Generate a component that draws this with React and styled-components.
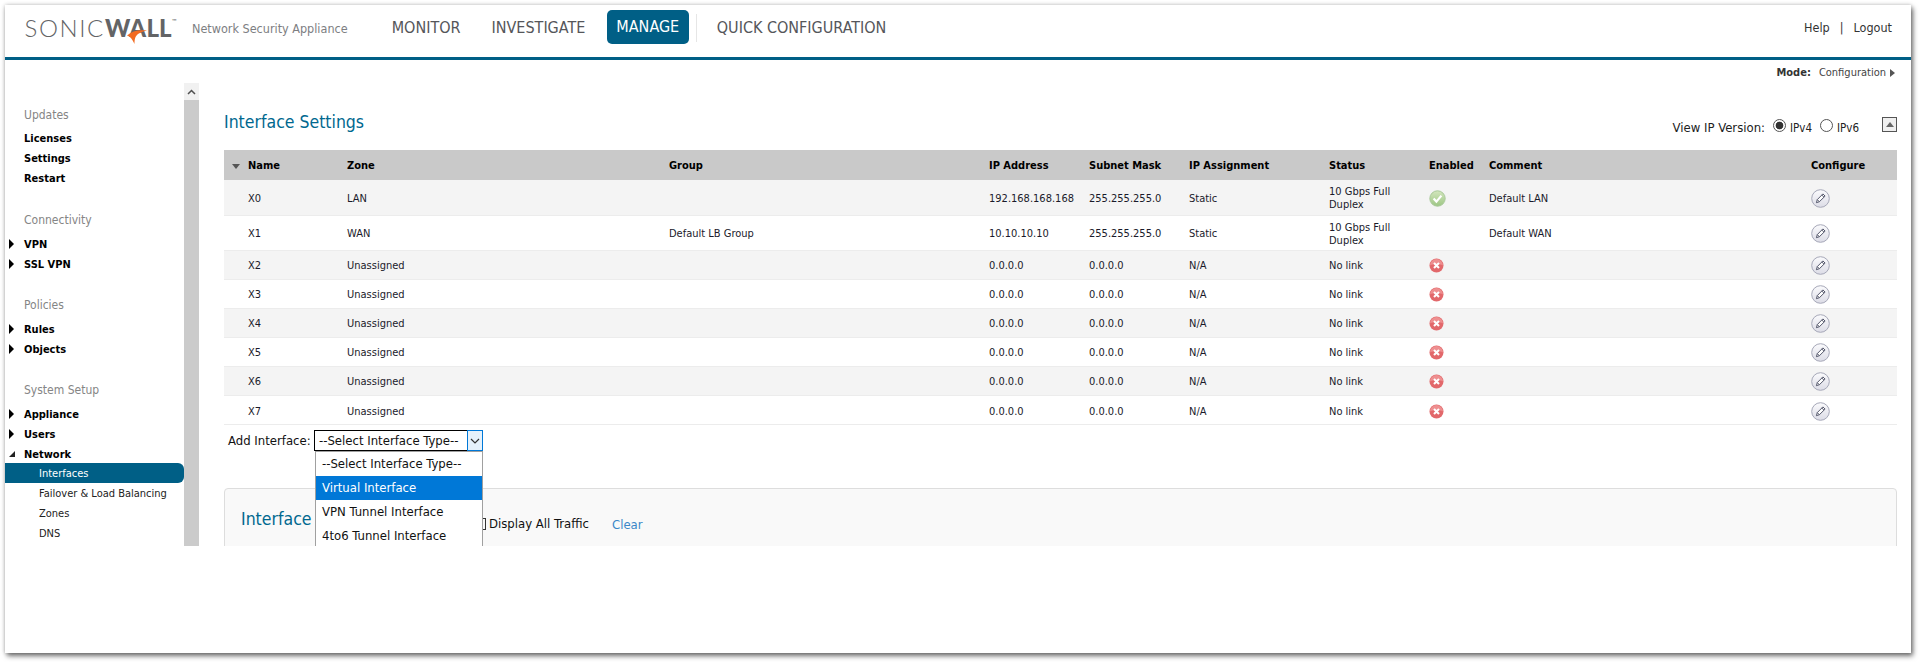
import React from 'react';
import styled, { createGlobalStyle } from 'styled-components';

const Global = createGlobalStyle`
	html, body { margin: 0; padding: 0; background: #fff; }
	body { font-family: "DejaVu Sans Condensed", "DejaVu Sans", sans-serif; font-stretch: condensed; color: #111; }
`;

const rows = [
	{ name: 'X0', zone: 'LAN', ip: '192.168.168.168', mask: '255.255.255.0', assign: 'Static', status: '10 Gbps Full Duplex', enabled: 'on', comment: 'Default LAN', tall: true },
	{ name: 'X1', zone: 'WAN', group: 'Default LB Group', ip: '10.10.10.10', mask: '255.255.255.0', assign: 'Static', status: '10 Gbps Full Duplex', comment: 'Default WAN', tall: true },
	...['X2', 'X3', 'X4', 'X5', 'X6', 'X7'].map(name => ({
		name,
		zone: 'Unassigned',
		ip: '0.0.0.0',
		mask: '0.0.0.0',
		assign: 'N/A',
		status: 'No link',
		enabled: 'off'
	}))
];

const columns = [123, 322, 320, 100, 100, 140, 100, 60, 322, 86];

const menu = [
	{ title: 'Updates', items: [{ label: 'Licenses' }, { label: 'Settings' }, { label: 'Restart' }] },
	{ title: 'Connectivity', items: [{ label: 'VPN', arrow: 'closed' }, { label: 'SSL VPN', arrow: 'closed' }] },
	{ title: 'Policies', items: [{ label: 'Rules', arrow: 'closed' }, { label: 'Objects', arrow: 'closed' }] },
	{ title: 'System Setup', items: [{ label: 'Appliance', arrow: 'closed' }, { label: 'Users', arrow: 'closed' }, { label: 'Network', arrow: 'open' }] }
];

const subMenu = ['Interfaces', 'Failover & Load Balancing', 'Zones', 'DNS'];

const StatusIcon = ({ state }) => {
	if (state === 'on') {
		return (
			<IconSvg width='17' height='17' viewBox='0 0 17 17'>
				<defs>
					<linearGradient id='okFill' x1='0' y1='0' x2='0' y2='1'>
						<stop offset='0' stopColor='#d3e6bd' />
						<stop offset='1' stopColor='#9dc684' />
					</linearGradient>
				</defs>
				<circle cx='8.5' cy='8.5' r='7.7' fill='url(#okFill)' stroke='#a9c99a' />
				<path d='M4.6 8.6l2.8 3 5-6' fill='none' stroke='#fff' strokeWidth='2.2' />
			</IconSvg>
		);
	}
	return (
		<IconSvg width='15' height='15' viewBox='0 0 15 15'>
			<circle cx='7.5' cy='7.5' r='7' fill='#e2686b' />
			<path d='M1 7.5a6.500 6.500 0 0 1 13 0c-3-2-10-2-13 0z' fill='#ee8f90' />
			<path d='M5 5l5 5M10 5l-5 5' stroke='#fff' strokeWidth='2.1' />
		</IconSvg>
	);
};

const PencilIcon = () => (
	<IconSvg width='19' height='19' viewBox='0 0 19 19'>
		<defs>
			<linearGradient id='penFill' x1='0' y1='0' x2='0' y2='1'>
				<stop offset='0' stopColor='#fbfbfd' />
				<stop offset='1' stopColor='#dcdce6' />
			</linearGradient>
		</defs>
		<circle cx='9.5' cy='9.5' r='8.8' fill='url(#penFill)' stroke='#a6a8b8' />
		<path d='M5.400 13.700l.9-3.100 5.600-5.700 2.200 2.200-5.700 5.600z' fill='#fff' stroke='#55586c' strokeWidth='1' strokeLinejoin='round' />
		<path d='M6.300 10.600l2.100 2.200M10.800 6l2.200 2.200' stroke='#55586c' strokeWidth='1' />
	</IconSvg>
);

export default function App() {
	return (
		<>
			<Global />
			<Window>
				<Header>
					<Logo>
						<LogoText>SONIC</LogoText>
						<LogoStrong>WALL</LogoStrong>
						<LogoMark>™</LogoMark>
						<Swoosh width='24' height='18' viewBox='0 0 24 18'>
							<path d='M22 1.500C13 .5 7 2 2 6.500C5.500 7.500 7.500 10.500 9.500 15C9.500 10.500 10 7.500 13 5C15.500 3.300 18 2.500 22 1.500Z' fill='#f26b21' />
						</Swoosh>
					</Logo>
					<Product>Network Security Appliance</Product>
					<NavLink $left={44}>MONITOR</NavLink>
					<NavLink $left={31}>INVESTIGATE</NavLink>
					<ActiveNav>MANAGE</ActiveNav>
					<NavDivider />
					<NavLink $left={20}>QUICK CONFIGURATION</NavLink>
					<UserLinks>
						<span>Help</span>
						<Pipe>|</Pipe>
						<span>Logout</span>
					</UserLinks>
				</Header>
				<ModeBar>
					<ModeLabel>Mode:</ModeLabel>
					<span>Configuration</span>
					<ModeArrow />
				</ModeBar>
				<Body>
					<Sidebar>
						{menu.map(group => (
							<div key={group.title}>
								<MenuHead>{group.title}</MenuHead>
								{group.items.map(item => (
									<MenuItem key={item.label} $arrow={item.arrow}>
										{item.label}
									</MenuItem>
								))}
							</div>
						))}
						<div>
							{subMenu.map((label, i) => (
								<SubItem key={label} $active={i === 0}>
									{label}
								</SubItem>
							))}
						</div>
					</Sidebar>
					<Scrollbar>
						<ScrollUp>
							<svg width='9' height='6' viewBox='0 0 9 6'>
								<path d='M1 5l3.500-3.500L8 5' fill='none' stroke='#505050' strokeWidth='1.500' />
							</svg>
						</ScrollUp>
					</Scrollbar>
					<Main>
						<TitleRow>
							<Title>Interface Settings</Title>
							<VersionPicker>
								<span>View IP Version:</span>
								<Radio $checked />
								<RadioLabel>IPv4</RadioLabel>
								<Radio />
								<RadioLabel>IPv6</RadioLabel>
								<CollapseButton />
							</VersionPicker>
						</TitleRow>
						<Table>
							<colgroup>
								{columns.map((w, i) => (
									<col key={i} width={w} />
								))}
							</colgroup>
							<thead>
								<tr>
									<Th $first>
										<SortArrow />
										Name
									</Th>
									<Th>Zone</Th>
									<Th>Group</Th>
									<Th>IP Address</Th>
									<Th>Subnet Mask</Th>
									<Th>IP Assignment</Th>
									<Th>Status</Th>
									<Th>Enabled</Th>
									<Th>Comment</Th>
									<Th>Configure</Th>
								</tr>
							</thead>
							<tbody>
								{rows.map(row => (
									<Row key={row.name} $tall={row.tall}>
										<Td $first>{row.name}</Td>
										<Td>{row.zone}</Td>
										<Td>{row.group}</Td>
										<Td>{row.ip}</Td>
										<Td>{row.mask}</Td>
										<Td>{row.assign}</Td>
										<Td>
											<StatusText>{row.status}</StatusText>
										</Td>
										<Td>{row.enabled && <StatusIcon state={row.enabled} />}</Td>
										<Td>{row.comment}</Td>
										<Td>
											<PencilIcon />
										</Td>
									</Row>
								))}
							</tbody>
						</Table>
						<AddRow>
							<AddLabel>Add Interface:</AddLabel>
							<SelectBox>
								<SelectValue>--Select Interface Type--</SelectValue>
								<SelectButton>
									<svg width='10' height='6' viewBox='0 0 10 6'>
										<path d='M1 1l4 4 4-4' fill='none' stroke='#333' strokeWidth='1.200' />
									</svg>
								</SelectButton>
								<Options>
									<Option>--Select Interface Type--</Option>
									<Option $selected>Virtual Interface</Option>
									<Option>VPN Tunnel Interface</Option>
									<Option>4to6 Tunnel Interface</Option>
								</Options>
							</SelectBox>
						</AddRow>
						<TrafficPanel>
							<PanelTitle>Interface</PanelTitle>
							<CheckBox />
							<TrafficLabel>Display All Traffic</TrafficLabel>
							<ClearLink>Clear</ClearLink>
						</TrafficPanel>
					</Main>
				</Body>
			</Window>
		</>
	);
}

const Window = styled.div`
	position: absolute;
	left: 5px;
	top: 5px;
	width: 1906px;
	height: 648px;
	background: #fff;
	box-shadow: 2px 3px 5px rgba(0, 0, 0, 0.55), 0 0 4px rgba(0, 0, 0, 0.22);
	overflow: hidden;
`;

const Header = styled.header`
	height: 46px;
	padding: 0 19px 6px 19.500px;
	border-bottom: 3px solid #005f86;
	display: flex;
	align-items: center;
`;

const Logo = styled.div`
	position: relative;
	width: 167.500px;
	flex: none;
	display: flex;
	align-items: baseline;
	font-family: Lato, "Open Sans", sans-serif;
	font-stretch: normal;
	font-size: 24px;
	line-height: 24px;
	color: #636466;
`;

const LogoText = styled.span`
	font-weight: 300;
	letter-spacing: 1.600px;
`;

const LogoStrong = styled.span`
	font-weight: 900;
	letter-spacing: 0.200px;
`;

const LogoMark = styled.span`
	font-size: 6px;
	align-self: flex-start;
	line-height: 10px;
`;

const Swoosh = styled.svg`
	position: absolute;
	left: 100px;
	top: 13px;
`;

const Product = styled.div`
	font-size: 12.500px;
	color: #7d7e82;
`;

const NavLink = styled.div`
	margin-left: ${({ $left }) => $left}px;
	margin-bottom: 2px;
	font-size: 16px;
	color: #55565a;
`;

const ActiveNav = styled.div`
	margin-left: 21.500px;
	width: 82px;
	height: 34px;
	align-self: flex-start;
	margin-top: 5px;
	padding-bottom: 2px;
	box-sizing: border-box;
	background: #005f86;
	border-radius: 5px;
	color: #fff;
	font-size: 16px;
	display: flex;
	align-items: center;
	justify-content: center;
`;

const NavDivider = styled.div`
	width: 1px;
	height: 28px;
	margin-left: 7px;
	background: #e6e6e6;
`;

const UserLinks = styled.div`
	margin-left: auto;
	margin-bottom: 2px;
	font-size: 12.500px;
	color: #333;
	display: flex;
`;

const Pipe = styled.span`
	margin: 0 10px;
`;

const ModeBar = styled.div`
	height: 20px;
	padding-right: 16px;
	font-size: 11px;
	color: #444;
	display: flex;
	align-items: flex-end;
	justify-content: flex-end;
	line-height: 14px;
`;

const ModeLabel = styled.b`
	margin-right: 8px;
	color: #333;
`;

const ModeArrow = styled.i`
	margin: 0 0 3px 4px;
	border-left: 5px solid #555;
	border-top: 4px solid transparent;
	border-bottom: 4px solid transparent;
`;

const Body = styled.div`
	position: absolute;
	left: 0;
	right: 0;
	top: 78px;
	height: 463px;
	overflow: hidden;
	display: flex;
`;

const Sidebar = styled.nav`
	width: 179px;
	flex: none;
	padding-top: 21px;
`;

const MenuHead = styled.div`
	height: 20px;
	line-height: 22px;
	margin: 0 0 4px 19px;
	font-size: 12px;
	color: #858585;
	div + div > & {
		margin: 20px 0 5px 19px;
		line-height: 24px;
	}
`;

const MenuItem = styled.div`
	position: relative;
	height: 20px;
	line-height: 22px;
	padding-left: 19px;
	font-size: 11px;
	font-weight: bold;
	color: #000;
	div + div > & {
		line-height: 24px;
	}
	&::before {
		content: '';
		position: absolute;
		display: ${({ $arrow }) => ($arrow ? 'block' : 'none')};
		left: 4px;
		top: 6px;
		${({ $arrow }) =>
			$arrow === 'open'
				? `top: 8px; border-bottom: 6px solid #222; border-left: 6px solid transparent;`
				: `border-left: 5px solid #000; border-top: 5px solid transparent; border-bottom: 5px solid transparent;`}
	}
`;

const SubItem = styled.div`
	height: 20px;
	line-height: 22px;
	padding-left: 34px;
	font-size: 11px;
	color: ${({ $active }) => ($active ? '#fff' : '#222')};
	background: ${({ $active }) => ($active ? '#005f86' : 'transparent')};
	border-radius: ${({ $active }) => ($active ? '0 6px 6px 0' : '0')};
`;

const Scrollbar = styled.div`
	width: 15px;
	flex: none;
	background: #cbcbcb;
`;

const ScrollUp = styled.div`
	height: 17px;
	background: #f1f1f1;
	display: flex;
	align-items: center;
	justify-content: center;
`;

const Main = styled.main`
	width: 1673px;
	margin-left: 25px;
	flex: none;
`;

const TitleRow = styled.div`
	height: 67px;
	display: flex;
	justify-content: space-between;
	align-items: flex-start;
`;

const Title = styled.h1`
	margin: 27px 0 0;
	font-size: 17.500px;
	line-height: 24px;
	font-weight: normal;
	color: #00688f;
`;

const VersionPicker = styled.div`
	margin-top: 37px;
	font-size: 13px;
	line-height: 16px;
	color: #222;
	display: flex;
	align-items: flex-start;
`;

const Radio = styled.i`
	width: 13px;
	height: 13px;
	box-sizing: border-box;
	margin: -1px 4px 0 8px;
	border: 1px solid #555;
	border-radius: 50%;
	background: ${({ $checked }) => ($checked ? 'radial-gradient(circle, #333 0 3.500px, #fff 4.200px)' : '#fff')};
`;

const RadioLabel = styled.span`
	font-size: 11.500px;
`;

const CollapseButton = styled.div`
	position: relative;
	width: 15px;
	height: 15px;
	box-sizing: border-box;
	margin: -3px 0 0 23px;
	border: 1px solid #555;
	background: #efefef;
	&::after {
		content: '';
		position: absolute;
		left: 3px;
		top: 4px;
		border-left: 4px solid transparent;
		border-right: 4px solid transparent;
		border-bottom: 5px solid #666;
	}
`;

const Table = styled.table`
	width: 1673px;
	table-layout: fixed;
	border-collapse: collapse;
	font-size: 11px;
`;

const Th = styled.th`
	height: 30px;
	box-sizing: border-box;
	padding: 1px 0 0 ${({ $first }) => ($first ? '24px' : '0')};
	position: relative;
	background: #c9c9c9;
	color: #000;
	font-weight: bold;
	text-align: left;
`;

const SortArrow = styled.i`
	position: absolute;
	left: 8px;
	top: 14px;
	border-left: 4px solid transparent;
	border-right: 4px solid transparent;
	border-top: 5px solid #555;
`;

const Row = styled.tr`
	height: ${({ $tall }) => ($tall ? '35px' : '29.1px')};
	&:nth-child(odd) {
		background: #f4f4f4;
	}
	border-bottom: 1px solid #ececec;
`;

const Td = styled.td`
	padding: 2px 0 0 ${({ $first }) => ($first ? '24px' : '0')};
	color: #1a1a2a;
	line-height: 13px;
	vertical-align: middle;
`;

const StatusText = styled.div`
	width: 76px;
`;

const IconSvg = styled.svg`
	display: block;
`;

const AddRow = styled.div`
	height: 21px;
	margin: 5px 0 0 4px;
	font-size: 13px;
	line-height: 21px;
	color: #111;
	display: flex;
`;

const AddLabel = styled.span`
	width: 86px;
	white-space: nowrap;
`;

const SelectBox = styled.div`
	position: relative;
	width: 169px;
	height: 21px;
	box-sizing: border-box;
	border: 1px solid #000;
	border-right: none;
	display: flex;
`;

const SelectValue = styled.div`
	flex: 1;
	padding-left: 4px;
	line-height: 20px;
	white-space: nowrap;
`;

const SelectButton = styled.div`
	width: 16px;
	height: 21px;
	margin-top: -1px;
	box-sizing: border-box;
	border: 1px solid #0078d7;
	background: #e5f1fb;
	display: flex;
	align-items: center;
	justify-content: center;
`;

const Options = styled.div`
	position: absolute;
	left: 0;
	top: 20px;
	width: 168px;
	box-sizing: border-box;
	border: 1px solid #a0a0a0;
	background: #fff;
	z-index: 2;
`;

const Option = styled.div`
	height: 24px;
	line-height: 24px;
	padding-left: 6px;
	white-space: nowrap;
	color: ${({ $selected }) => ($selected ? '#fff' : '#111')};
	background: ${({ $selected }) => ($selected ? '#0078d7' : '#fff')};
`;

const TrafficPanel = styled.div`
	height: 120px;
	margin-top: 37px;
	box-sizing: border-box;
	border: 1px solid #ddd;
	border-radius: 4px;
	background: #f9f9f9;
	display: flex;
	align-items: flex-start;
`;

const PanelTitle = styled.div`
	width: 232px;
	margin: 18px 0 0 16px;
	font-size: 17.500px;
	line-height: 24px;
	color: #00688f;
	white-space: nowrap;
`;

const CheckBox = styled.i`
	width: 12px;
	height: 12px;
	margin: 29px 3px 0 1px;
	box-sizing: border-box;
	border: 1px solid #333;
`;

const TrafficLabel = styled.span`
	margin-top: 26px;
	font-size: 13px;
	line-height: 18px;
	color: #111;
`;

const ClearLink = styled.span`
	margin: 27px 0 0 23px;
	font-size: 13px;
	line-height: 18px;
	color: #3b87c8;
`;
